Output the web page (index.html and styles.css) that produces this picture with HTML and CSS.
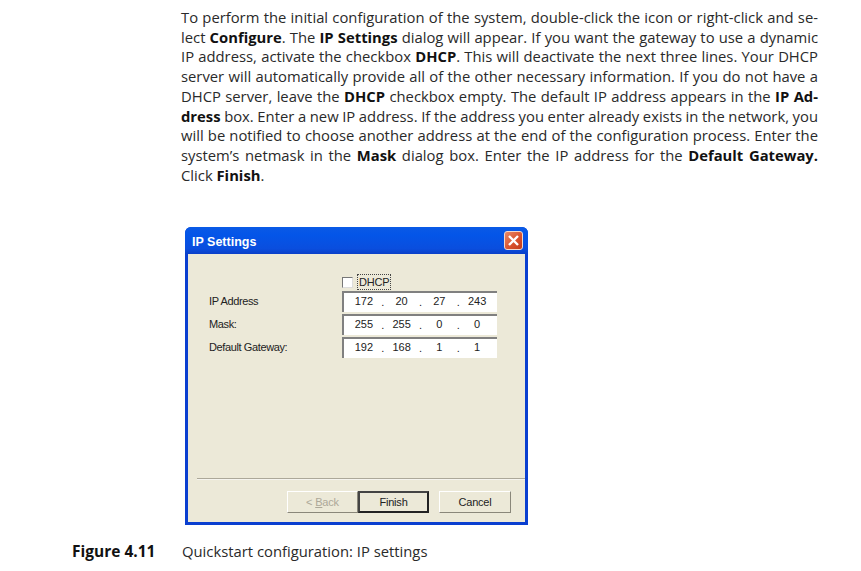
FILE: index.html
```html
<!DOCTYPE html>
<html lang="en">
<head>
    <meta charset="UTF-8">
    <meta name="viewport" content="width=device-width, initial-scale=1.0">
    <title>Quickstart configuration</title>
    <link rel="stylesheet" href="styles.css">
</head>
<body>
    <div class="page-text">
        <div class="line">To perform the initial configuration of the system, double-click the icon or right-click and se-</div>
        <div class="line">lect <b>Configure</b>. The <b>IP Settings</b> dialog will appear. If you want the gateway to use a dynamic</div>
        <div class="line">IP address, activate the checkbox <b>DHCP</b>. This will deactivate the next three lines. Your DHCP</div>
        <div class="line">server will automatically provide all of the other necessary information. If you do not have a</div>
        <div class="line">DHCP server, leave the <b>DHCP</b> checkbox empty. The default IP address appears in the <b>IP Ad-</b></div>
        <div class="line"><b>dress</b> box. Enter a new IP address. If the address you enter already exists in the network, you</div>
        <div class="line">will be notified to choose another address at the end of the configuration process. Enter the</div>
        <div class="line">system’s netmask in the <b>Mask</b> dialog box. Enter the IP address for the <b>Default Gateway.</b></div>
        <div class="line-last">Click <b>Finish</b>.</div>
    </div>

    <div class="dialog">
        <div class="title-bar">
            <span class="title">IP Settings</span>
            <span class="close-btn">
                <svg width="15" height="15" viewBox="0 0 15 15"><path d="M3 3 L12 12 M12 3 L3 12" stroke="#fff" stroke-width="2.4" fill="none"/></svg>
            </span>
        </div>
        <div class="dialog-body">
            <div class="dhcp-row">
                <span class="checkbox"></span>
                <span class="dhcp-label">DHCP</span>
            </div>
            <div class="field-row">
                <label>IP Address</label>
                <div class="ip-box"><span>172</span><i>.</i><span>20</span><i>.</i><span>27</span><i>.</i><span>243</span></div>
            </div>
            <div class="field-row">
                <label>Mask:</label>
                <div class="ip-box"><span>255</span><i>.</i><span>255</span><i>.</i><span>0</span><i>.</i><span>0</span></div>
            </div>
            <div class="field-row">
                <label>Default Gateway:</label>
                <div class="ip-box"><span>192</span><i>.</i><span>168</span><i>.</i><span>1</span><i>.</i><span>1</span></div>
            </div>
            <div class="separator"></div>
            <div class="button-row">
                <button class="btn btn-disabled">&lt; <u>B</u>ack</button>
                <button class="btn btn-default">Finish</button>
                <button class="btn btn-cancel">Cancel</button>
            </div>
        </div>
    </div>

    <div class="caption">
        <b>Figure 4.11</b>
        <span>Quickstart configuration: IP settings</span>
    </div>
</body>
</html>
```

FILE: styles.css
```css
* {
    margin: 0;
    padding: 0;
    box-sizing: border-box;
}

body {
    background-color: #fff;
    color: #2a2a2a;
    font-family: "Open Sans", "Noto Sans", sans-serif;
    font-size: 14.8px;
    padding-top: 8px;
}

.page-text {
    width: 637px;
    margin-left: 181px;
    line-height: 19.7px;
}

.line {
    text-align: justify;
    text-align-last: justify;
    word-spacing: -0.4px;
    white-space: nowrap;
}

.page-text b,
.caption b {
    color: #111;
}

.dialog {
    width: 343px;
    height: 298px;
    margin: 42px 0 0 185px;
    display: flex;
    flex-direction: column;
    background-color: #0a3fd0;
    border-radius: 6px 6px 0 0;
    padding: 0 3px 3px;
    font-family: "Liberation Sans", Arial, sans-serif;
    font-size: 11px;
    color: #222;
}

.title-bar {
    height: 27px;
    display: flex;
    align-items: center;
    justify-content: space-between;
    padding: 0 2px 0 3px;
    flex-shrink: 0;
    margin: 0 -3px;
    border-radius: 6px 6px 0 0;
    background: linear-gradient(#0a5ae6, #0455e8 30%, #0a4ede 80%, #0a3fc8);
}

.title {
    color: #fff;
    font-family: "Liberation Sans", Arial, sans-serif;
    font-size: 12.5px;
    font-weight: bold;
    margin-left: 4px;
    padding-top: 2px;
}

.close-btn {
    width: 19px;
    height: 19px;
    margin-right: 3px;
    display: flex;
    align-items: center;
    justify-content: center;
    border: 1px solid #f3d8cc;
    border-radius: 3px;
    background: linear-gradient(135deg, #e88a68, #d8502c 60%, #c23c1c);
}

.dialog-body {
    flex: 1;
    background-color: #ece9d8;
    padding: 20px 0 0;
    display: flex;
    flex-direction: column;
}

.dhcp-row {
    height: 16px;
    display: flex;
    align-items: center;
    margin-left: 154px;
}

.checkbox {
    width: 11px;
    height: 11px;
    background-color: #fff;
    border-top: 1px solid #777;
    border-left: 1px solid #777;
    border-right: 1px solid #ddd;
    border-bottom: 1px solid #ddd;
}

.dhcp-label {
    margin-left: 4px;
    padding: 1px;
    border: 1px dotted #444;
    letter-spacing: -0.2px;
}

.field-row {
    display: flex;
    align-items: center;
    height: 21px;
    margin-bottom: 2px;
}

.dhcp-row + .field-row {
    margin-top: 1px;
}

.field-row label {
    width: 133px;
    margin-left: 21px;
    padding-bottom: 2px;
    letter-spacing: -0.38px;
}

.ip-box {
    width: 155px;
    height: 21px;
    display: flex;
    align-items: center;
    background-color: #fff;
    border-top: 2px solid #808080;
    border-left: 2px solid #808080;
    padding: 0 1.5px 3px;
}

.ip-box span {
    flex: 1;
    text-align: center;
}

.ip-box i {
    font-style: normal;
    width: 1px;
    display: flex;
    justify-content: center;
    padding-top: 1px;
}

.separator {
    margin: 118px 0 0 9px;
    border-top: 1px solid #aca899;
    border-bottom: 1px solid #f5f4ee;
}

.button-row {
    display: flex;
    margin: 11px 0 0 99px;
}

.btn {
    width: 71px;
    height: 22px;
    background-color: #ece9d8;
    font-family: "Liberation Sans", Arial, sans-serif;
    font-size: 11px;
    letter-spacing: -0.2px;
    color: #222;
    border: 1px solid;
    border-color: #fff #8a877a #8a877a #fff;
}

.btn-disabled {
    color: #aca899;
}

.btn-default {
    border: 2px solid #333;
    border-color: #444 #222 #222 #444;
}

.btn-cancel {
    width: 72px;
    margin-left: 10px;
}

.caption {
    display: flex;
    margin: 17px 0 0 72px;
    line-height: 19px;
}

.caption b {
    width: 110px;
    font-size: 15.5px;
}
```
